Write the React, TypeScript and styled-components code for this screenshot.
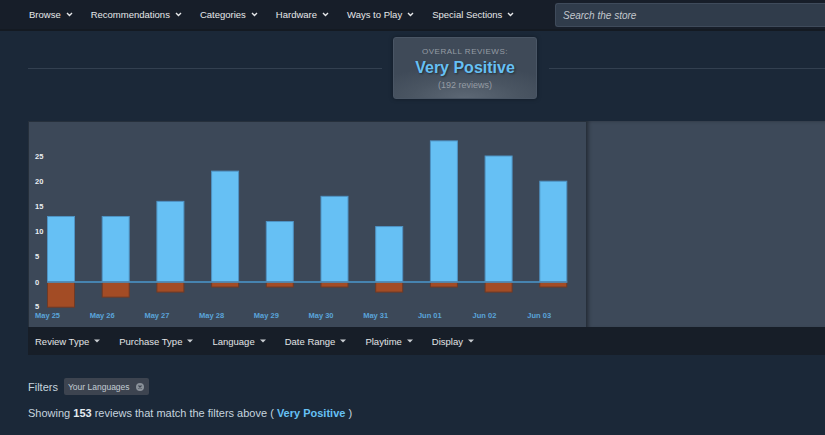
import styled, { createGlobalStyle } from "styled-components";

const GlobalStyle = createGlobalStyle`
    html, body {
        margin: 0;
        padding: 0;
        background: #1b2838;
        overflow: hidden;
    }
    body {
        font-family: "Liberation Sans", Arial, sans-serif;
    }
`;

// Top store navigation
const NavBar = styled.nav`
    height: 29px;
    border-bottom: 2px solid #141a22;
    background: #171e29;
    display: flex;
    align-items: center;
`;

const NavMenu = styled.div`
    width: 555px;
    flex-shrink: 0;
    padding-left: 29px;
    box-sizing: border-box;
    display: flex;
    align-items: center;
    overflow: hidden;
`;

const NavItem = styled.div`
    display: flex;
    align-items: center;
    gap: 5px;
    margin-right: 18px;
    color: #e6e8ea;
    font-size: 9.5px;
    white-space: nowrap;
`;

const SearchBox = styled.div`
    flex: 1;
    height: 22px;
    margin-top: 1px;
    background: #303c4b;
    border: 1px solid #3f4b5b;
    border-right: none;
    border-radius: 3px 0 0 3px;
    display: flex;
    align-items: center;
    padding-left: 7px;
    color: #c3c8ce;
    font-size: 10px;
    font-style: italic;
`;

const Main = styled.div`
    padding-left: 28px;
`;

// "Overall reviews" header with the lines on both sides
const ReviewHeader = styled.div`
    margin-top: 6px;
    height: 62px;
    display: flex;
    align-items: center;
`;

const Rule = styled.div<{ $width?: number }>`
    height: 1px;
    background: #334050;
    ${({ $width }) => ($width ? `width: ${$width}px; flex-shrink: 0;` : "flex: 1;")}
`;

const SummaryBox = styled.div`
    width: 144px;
    height: 62px;
    margin: 0 12px 0 11px;
    box-sizing: border-box;
    border: 1px solid #4a5665;
    border-radius: 3px;
    background: radial-gradient(ellipse 70% 55% at 50% 100%, #5d6875 0%, #4a5562 55%, #3f4a58 100%);
    box-shadow: 0 0 4px rgba(0, 0, 0, 0.35);
    display: flex;
    flex-direction: column;
    align-items: center;
    padding-top: 8px;
`;

const SummaryLabel = styled.div`
    font-size: 8px;
    letter-spacing: 0.5px;
    color: #959ca4;
    line-height: 11px;
`;

const SummaryValue = styled.div`
    font-size: 16px;
    font-weight: bold;
    color: #66c0f4;
    line-height: 20px;
    margin-top: 1px;
    text-shadow: 1px 1px 2px rgba(0, 0, 0, 0.45);
`;

const SummaryCount = styled.div`
    font-size: 9px;
    color: #959ca4;
    line-height: 12px;
    margin-top: 1px;
`;

// Histogram row
const ChartRow = styled.div`
    margin-top: 22px;
    height: 206px;
    display: flex;
`;

const ChartPanel = styled.div`
    width: 558px;
    flex-shrink: 0;
    background: #3c4858;
    box-shadow: inset 1px 1px 0 #26303c;
`;

const SidePanel = styled.div`
    flex: 1;
    background: #3d4959;
    border-left: 1px solid #27303b;
    box-shadow: inset 3px 1px 4px -2px rgba(0, 0, 0, 0.45);
`;

// Filter dropdown bar
const FilterBar = styled.div`
    height: 28px;
    background: #171e28;
    display: flex;
    align-items: center;
    padding-left: 7px;
`;

const FilterMenu = styled.div`
    display: flex;
    align-items: center;
    gap: 5px;
    margin-right: 19px;
    color: #e2e4e6;
    font-size: 9.5px;
    white-space: nowrap;
`;

const FiltersRow = styled.div`
    margin-top: 23px;
    height: 17px;
    display: flex;
    align-items: center;
    gap: 6px;
`;

const FiltersLabel = styled.span`
    color: #c6d4df;
    font-size: 11px;
`;

const Chip = styled.div`
    height: 17px;
    padding: 0 5px 0 4px;
    background: #3d4450;
    border-radius: 2px;
    display: flex;
    align-items: center;
    gap: 6px;
    color: #c3ccd4;
    font-size: 8.5px;
`;

const ShowingText = styled.div`
    margin-top: 11px;
    color: #c6d4df;
    font-size: 11px;
    line-height: 14px;

    b {
        color: #e4ebf1;
    }
`;

const Highlight = styled.b`
    && {
        color: #66c0f4;
    }
`;

function Chevron() {
    return (
        <svg width="7" height="5" viewBox="0 0 7 5">
            <path d="M1 1 L3.5 3.5 L6 1" fill="none" stroke="#e6e8ea" strokeWidth="1.4" />
        </svg>
    );
}

function Caret() {
    return (
        <svg width="6" height="4" viewBox="0 0 6 4">
            <path d="M0 0.5 H6 L3 3.5 Z" fill="#c9cdd1" />
        </svg>
    );
}

function CloseDot() {
    return (
        <svg width="8" height="8" viewBox="0 0 8 8">
            <circle cx="4" cy="4" r="4" fill="#8a9199" />
            <path d="M2.5 2.5 L5.5 5.5 M5.5 2.5 L2.5 5.5" stroke="#3d4450" strokeWidth="1.1" />
        </svg>
    );
}

const days = [
    { label: "May 25", up: 13, down: 5 },
    { label: "May 26", up: 13, down: 3 },
    { label: "May 27", up: 16, down: 2 },
    { label: "May 28", up: 22, down: 1 },
    { label: "May 29", up: 12, down: 1 },
    { label: "May 30", up: 17, down: 1 },
    { label: "May 31", up: 11, down: 2 },
    { label: "Jun 01", up: 28, down: 1 },
    { label: "Jun 02", up: 25, down: 2 },
    { label: "Jun 03", up: 20, down: 1 },
];

const ZERO = 161;
const UNIT = 5.04;
const X0 = 19;
const STEP = 54.7;
const BAR_W = 27;

function Histogram() {
    const ticks = [25, 20, 15, 10, 5, 0, -5];
    return (
        <svg width="558" height="206" viewBox="0 0 558 206">
            {ticks.map((t) => (
                <text
                    key={t}
                    x="7"
                    y={ZERO - t * UNIT - (t < 0 ? 1 : 0)}
                    dominantBaseline="central"
                    fontSize="7.5"
                    fontWeight="bold"
                    fill="#e9edf0"
                    fontFamily="Liberation Sans, Arial, sans-serif"
                >
                    {Math.abs(t)}
                </text>
            ))}
            {days.map((d, i) => {
                const x = X0 + i * STEP;
                return (
                    <g key={d.label}>
                        <rect
                            x={x + 0.5}
                            y={ZERO - d.up * UNIT}
                            width={BAR_W}
                            height={d.up * UNIT}
                            fill="#66c0f4"
                            stroke="#4f93c4"
                            strokeWidth="1"
                        />
                        <rect
                            x={x + 0.5}
                            y={ZERO}
                            width={BAR_W}
                            height={d.down * UNIT}
                            fill="#a34c25"
                            stroke="#6e3a26"
                            strokeWidth="1"
                        />
                        <text
                            x={x - 12}
                            y="194"
                            dominantBaseline="central"
                            fontSize="7.5"
                            fontWeight="bold"
                            fill="#5aa4da"
                            fontFamily="Liberation Sans, Arial, sans-serif"
                        >
                            {d.label}
                        </text>
                    </g>
                );
            })}
            <line
                x1={X0}
                x2={X0 + 9 * STEP + BAR_W + 1}
                y1={ZERO}
                y2={ZERO}
                stroke="#4a97cc"
                strokeWidth="1.5"
            />
        </svg>
    );
}

const navItems = ["Browse", "Recommendations", "Categories", "Hardware", "Ways to Play", "Special Sections"];
const filterMenus = ["Review Type", "Purchase Type", "Language", "Date Range", "Playtime", "Display"];

export default function App() {
    return (
        <>
            <GlobalStyle />
            <NavBar>
                <NavMenu>
                    {navItems.map((item) => (
                        <NavItem key={item}>
                            {item}
                            <Chevron />
                        </NavItem>
                    ))}
                </NavMenu>
                <SearchBox>Search the store</SearchBox>
            </NavBar>
            <Main>
                <ReviewHeader>
                    <Rule $width={354} />
                    <SummaryBox>
                        <SummaryLabel>OVERALL REVIEWS:</SummaryLabel>
                        <SummaryValue>Very Positive</SummaryValue>
                        <SummaryCount>(192 reviews)</SummaryCount>
                    </SummaryBox>
                    <Rule />
                </ReviewHeader>
                <ChartRow>
                    <ChartPanel>
                        <Histogram />
                    </ChartPanel>
                    <SidePanel />
                </ChartRow>
                <FilterBar>
                    {filterMenus.map((m) => (
                        <FilterMenu key={m}>
                            {m}
                            <Caret />
                        </FilterMenu>
                    ))}
                </FilterBar>
                <FiltersRow>
                    <FiltersLabel>Filters</FiltersLabel>
                    <Chip>
                        Your Languages
                        <CloseDot />
                    </Chip>
                </FiltersRow>
                <ShowingText>
                    Showing <b>153</b> reviews that match the filters above ( <Highlight>Very Positive</Highlight> )
                </ShowingText>
            </Main>
        </>
    );
}
